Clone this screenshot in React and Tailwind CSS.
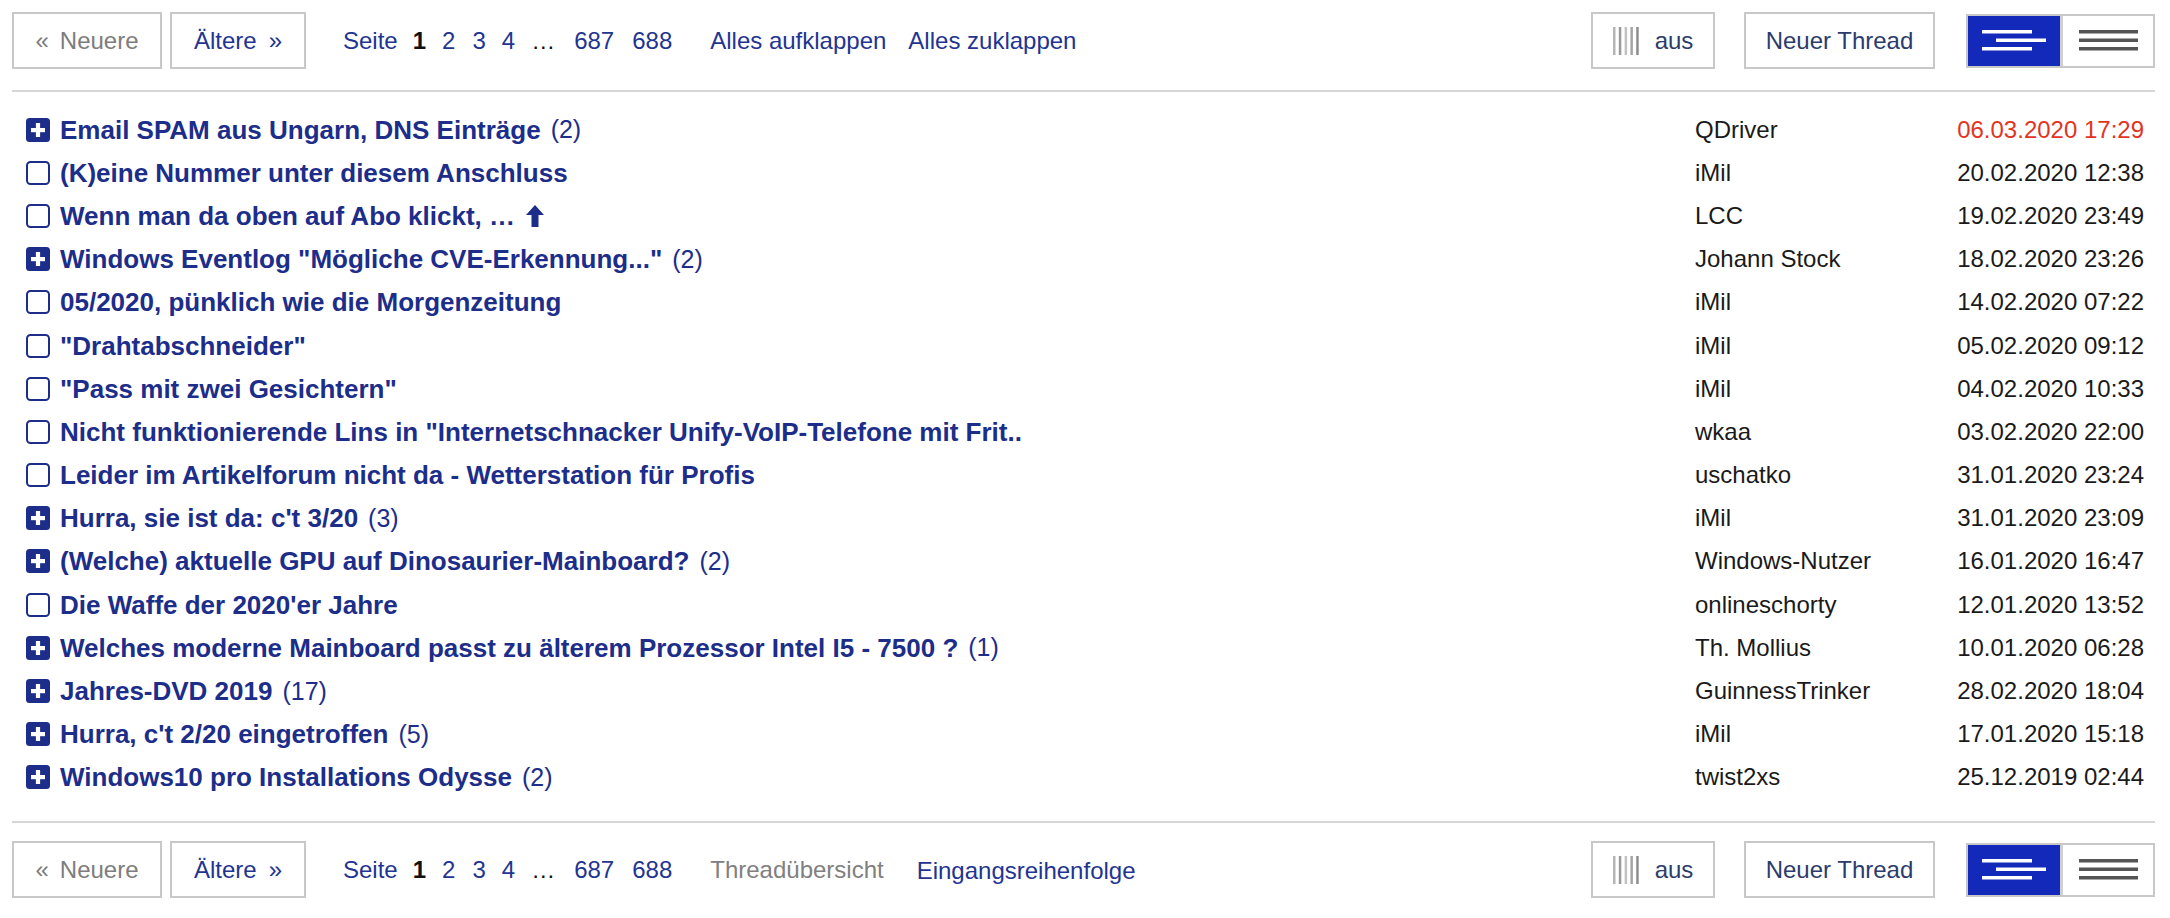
import React from "react";

const rows = [
  { plus: true, title: "Email SPAM aus Ungarn, DNS Einträge", count: 2, author: "QDriver", date: "06.03.2020 17:29", red: true },
  { title: "(K)eine Nummer unter diesem Anschluss", author: "iMil", date: "20.02.2020 12:38" },
  { title: "Wenn man da oben auf Abo klickt, …", arrow: true, author: "LCC", date: "19.02.2020 23:49" },
  { plus: true, title: 'Windows Eventlog "Mögliche CVE-Erkennung..."', count: 2, author: "Johann Stock", date: "18.02.2020 23:26" },
  { title: "05/2020, pünklich wie die Morgenzeitung", author: "iMil", date: "14.02.2020 07:22" },
  { title: '"Drahtabschneider"', author: "iMil", date: "05.02.2020 09:12" },
  { title: '"Pass mit zwei Gesichtern"', author: "iMil", date: "04.02.2020 10:33" },
  { title: 'Nicht funktionierende Lins in "Internetschnacker Unify-VoIP-Telefone mit Frit..', author: "wkaa", date: "03.02.2020 22:00" },
  { title: "Leider im Artikelforum nicht da - Wetterstation für Profis", author: "uschatko", date: "31.01.2020 23:24" },
  { plus: true, title: "Hurra, sie ist da: c't 3/20", count: 3, author: "iMil", date: "31.01.2020 23:09" },
  { plus: true, title: "(Welche) aktuelle GPU auf Dinosaurier-Mainboard?", count: 2, author: "Windows-Nutzer", date: "16.01.2020 16:47" },
  { title: "Die Waffe der 2020'er Jahre", author: "onlineschorty", date: "12.01.2020 13:52" },
  { plus: true, title: "Welches moderne Mainboard passt zu älterem Prozessor Intel I5 - 7500 ?", count: 1, author: "Th. Mollius", date: "10.01.2020 06:28" },
  { plus: true, title: "Jahres-DVD 2019", count: 17, author: "GuinnessTrinker", date: "28.02.2020 18:04" },
  { plus: true, title: "Hurra, c't 2/20 eingetroffen", count: 5, author: "iMil", date: "17.01.2020 15:18" },
  { plus: true, title: "Windows10 pro Installations Odysse", count: 2, author: "twist2xs", date: "25.12.2019 02:44" },
];

function PlusIcon() {
  return (
    <svg width="24" height="24" viewBox="0 0 24 24" className="shrink-0">
      <rect x="0" y="0" width="24" height="24" rx="3.5" fill="#1c2d8a" />
      <rect x="5" y="10" width="14" height="4.2" fill="#fff" />
      <rect x="9.9" y="5" width="4.2" height="14" fill="#fff" />
    </svg>
  );
}

function BoxIcon() {
  return (
    <svg width="24" height="24" viewBox="0 0 24 24" className="shrink-0">
      <rect x="1" y="1" width="22" height="22" rx="3.5" fill="#fff" stroke="#1c2d8a" strokeWidth="2" />
    </svg>
  );
}

function UpArrow() {
  return (
    <svg width="20" height="22" viewBox="0 0 20 22" className="ml-[10px] shrink-0">
      <path d="M10 0 L19 10 L13.5 10 L13.5 22 L6.5 22 L6.5 10 L1 10 Z" fill="#1c2d8a" />
    </svg>
  );
}

function Stripes() {
  return (
    <svg width="26" height="28" viewBox="0 0 26 28">
      <rect x="0" y="0" width="2.5" height="28" fill="#b5b5b5" />
      <rect x="5.8" y="0" width="2.5" height="28" fill="#9a9a9a" />
      <rect x="11.6" y="0" width="2.5" height="28" fill="#c2c2c2" />
      <rect x="17.4" y="0" width="2.5" height="28" fill="#a5a5a5" />
      <rect x="23.2" y="0" width="2.5" height="28" fill="#8e8e8e" />
    </svg>
  );
}

function Toolbar({ bottom }) {
  return (
    <div className="flex items-center h-[57px]">
      <div className="w-[150px] h-[57px] border-2 border-[#c8c8c8] flex items-center justify-center text-[#7d7d7d]">
        <span>«</span>
        <span className="ml-[11px]">Neuere</span>
      </div>
      <div className="ml-[8px] w-[136px] h-[57px] border-2 border-[#c8c8c8] flex items-center justify-center text-[#1f3591]">
        <span>Ältere</span>
        <span className="ml-[12px]">»</span>
      </div>
      <div className="ml-[37px] flex items-center text-[#1f3591] whitespace-nowrap">
        <span>Seite</span>
        <span className="ml-[15px] font-bold text-[#111]">1</span>
        <span className="ml-[16px]">2</span>
        <span className="ml-[17px]">3</span>
        <span className="ml-[16px]">4</span>
        <span className="ml-[16px] text-[#111] tracking-[1px]">…</span>
        <span className="ml-[18px]">687</span>
        <span className="ml-[18px]">688</span>
      </div>
      {bottom ? (
        <>
          <span className="ml-[38px] text-[#808080]">Threadübersicht</span>
          <span className="ml-[33px] text-[#1f3591] mt-[3px]">Eingangsreihenfolge</span>
        </>
      ) : (
        <>
          <span className="ml-[38px] text-[#1f3591]">Alles aufklappen</span>
          <span className="ml-[22px] text-[#1f3591]">Alles zuklappen</span>
        </>
      )}
      <div className="ml-auto flex items-center">
        <div className="w-[124px] h-[57px] border-2 border-[#c8c8c8] flex items-center justify-center text-[#2c3c6c]">
          <Stripes />
          <span className="ml-[16px]">aus</span>
        </div>
        <div className="ml-[29px] w-[191px] h-[57px] border-2 border-[#c8c8c8] flex items-center justify-center text-[#2c3c6c]">
          Neuer Thread
        </div>
        <div className="ml-[31px] w-[189px] h-[54px] border-2 border-[#c8c8c8] flex">
          <div className="w-[95px] h-full bg-[#1229b9] flex items-center justify-center border-r-[3px] border-[#d0d0d0]">
            <svg width="64" height="22" viewBox="0 0 64 22">
              <rect x="0" y="0" width="50" height="3.5" fill="#fff" />
              <rect x="14" y="8.5" width="50" height="3.5" fill="#fff" />
              <rect x="0" y="17" width="50" height="3.5" fill="#fff" />
            </svg>
          </div>
          <div className="flex-1 h-full bg-white flex items-center justify-center">
            <svg width="59" height="21" viewBox="0 0 59 21">
              <rect x="0" y="0" width="59" height="3.5" fill="#555" />
              <rect x="0" y="8.5" width="59" height="3.5" fill="#555" />
              <rect x="0" y="17" width="59" height="3.5" fill="#555" />
            </svg>
          </div>
        </div>
      </div>
    </div>
  );
}

export default function App() {
  return (
    <div
      className="w-[2170px] h-[918px] bg-white overflow-hidden pl-[12px] pr-[15px] pt-[12px] text-[24px] leading-none"
      style={{ fontFamily: '"Liberation Sans", Arial, Helvetica, sans-serif' }}
    >
      <Toolbar />
      <div className="mt-[21px] h-[2px] bg-[#d6d6d6]" />
      <div className="pt-[16px] pb-[22px]">
        {rows.map((r, i) => (
          <div key={i} className="h-[43.2px] flex items-center pl-[14px] pr-[11px]">
            <div className="flex-1 flex items-center min-w-0">
              {r.plus ? <PlusIcon /> : <BoxIcon />}
              <span className="ml-[10px] font-bold text-[26px] text-[#1c2d8a] whitespace-nowrap">{r.title}</span>
              {r.arrow && <UpArrow />}
              {r.count != null && (
                <span className="ml-[10px] text-[25px] text-[#1c2d8a] whitespace-nowrap">({r.count})</span>
              )}
            </div>
            <div className="w-[249px] text-[#1a1a1a] whitespace-nowrap">{r.author}</div>
            <div className={"w-[200px] text-right whitespace-nowrap " + (r.red ? "text-[#e2341f]" : "text-[#1a1a1a]")}>{r.date}</div>
          </div>
        ))}
      </div>
      <div className="h-[2px] bg-[#d6d6d6]" />
      <div className="mt-[18px]">
        <Toolbar bottom />
      </div>
    </div>
  );
}
